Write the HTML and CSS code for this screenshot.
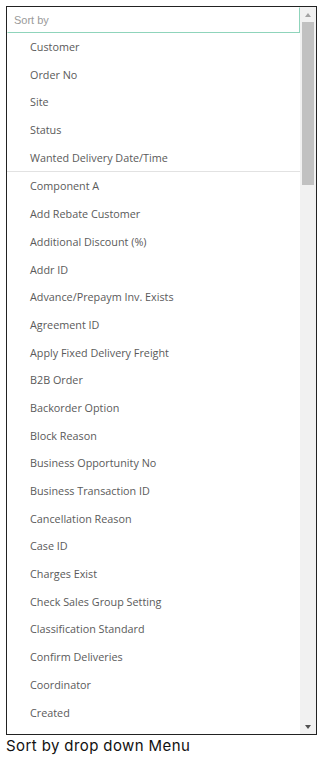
FILE: index.html
```html
<!DOCTYPE html>
<html lang="en">
<head>
    <meta charset="UTF-8">
    <meta name="viewport" content="width=device-width, initial-scale=1.0">
    <title>Sort by drop down Menu</title>
    <link rel="stylesheet" href="styles.css">
</head>
<body>
    <div class="dropdown">
        <div class="dropdown-main">
            <input class="search" type="text" placeholder="Sort by">
            <div class="options">
                <div class="group">
                    <div class="option">Customer</div>
                    <div class="option">Order No</div>
                    <div class="option">Site</div>
                    <div class="option">Status</div>
                    <div class="option">Wanted Delivery Date/Time</div>
                </div>
                <div class="group">
                    <div class="option">Component A</div>
                    <div class="option">Add Rebate Customer</div>
                    <div class="option">Additional Discount (%)</div>
                    <div class="option">Addr ID</div>
                    <div class="option">Advance/Prepaym Inv. Exists</div>
                    <div class="option">Agreement ID</div>
                    <div class="option">Apply Fixed Delivery Freight</div>
                    <div class="option">B2B Order</div>
                    <div class="option">Backorder Option</div>
                    <div class="option">Block Reason</div>
                    <div class="option">Business Opportunity No</div>
                    <div class="option">Business Transaction ID</div>
                    <div class="option">Cancellation Reason</div>
                    <div class="option">Case ID</div>
                    <div class="option">Charges Exist</div>
                    <div class="option">Check Sales Group Setting</div>
                    <div class="option">Classification Standard</div>
                    <div class="option">Confirm Deliveries</div>
                    <div class="option">Coordinator</div>
                    <div class="option">Created</div>
                </div>
            </div>
        </div>
        <!-- scrollbar drawn by hand so it looks the same everywhere -->
        <div class="scrollbar">
            <div class="arrow up"></div>
            <div class="track">
                <div class="thumb"></div>
            </div>
            <div class="arrow down"></div>
        </div>
    </div>
    <div class="caption">Sort by drop down Menu</div>
</body>
</html>
```

FILE: styles.css
```css
body {
    margin: 6px;
    background-color: #fff;
}
.dropdown {
    display: flex;
    width: 309px;
    height: 727px;
    border: 1px solid #222;
    background-color: #fff;
}
.dropdown-main {
    flex: 1;
    display: flex;
    flex-direction: column;
    min-width: 0;
}
.search {
    box-sizing: border-box;
    height: 26px;
    margin: 0;
    padding: 0 6px;
    border: 1px solid #8fd4bb;
    border-top-color: #fff;
    border-left-color: #fff;
    outline: none;
    font-family: "Liberation Sans", Arial, sans-serif;
    font-size: 11px;
    color: #333;
}
.search::placeholder {
    color: #9a9a9a;
}
.options {
    flex: 1;
    overflow: hidden;
}
.group + .group {
    border-top: 1px solid #e2e2e2;
}
.option {
    height: 27.7px;
    line-height: 27.7px;
    padding-left: 23px;
    font-family: "Open Sans", sans-serif;
    font-size: 10.8px;
    color: #5a5a5a;
    white-space: nowrap;
}
.scrollbar {
    width: 16px;
    display: flex;
    flex-direction: column;
    background-color: #f1f1f1;
}
.arrow {
    height: 15px;
    display: flex;
    justify-content: center;
    align-items: center;
}
.arrow::before {
    content: "";
    border-left: 3.5px solid transparent;
    border-right: 3.5px solid transparent;
}
.arrow.up::before {
    border-bottom: 4px solid #a3a3a3;
}
.arrow.down::before {
    border-top: 4px solid #505050;
}
.track {
    flex: 1;
    padding: 0 2px;
}
.thumb {
    height: 163px;
    background-color: #c1c1c1;
}
.caption {
    margin-top: 2px;
    font-family: "Inter", sans-serif;
    font-size: 15px;
    line-height: 18px;
    letter-spacing: 0.4px;
    color: #111;
}
```
